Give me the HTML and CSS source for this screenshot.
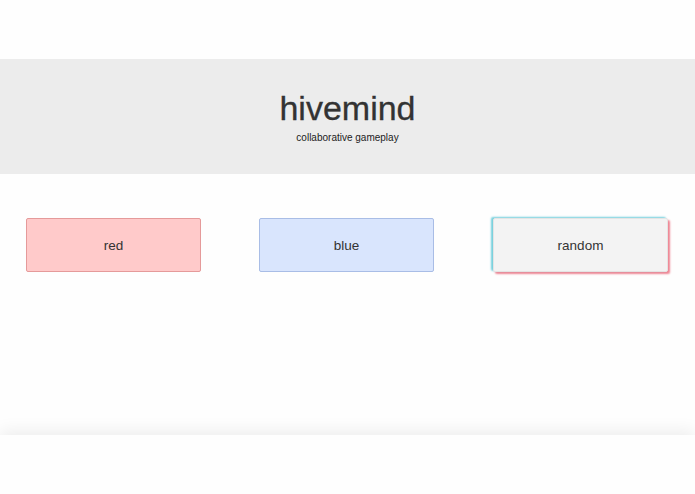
FILE: index.html
```html
<!DOCTYPE html>
<html lang="en">

<head>
  <meta charset="UTF-8">
  <meta name="viewport" content="width=device-width, initial-scale=1.0">
  <title>hivemind</title>
  <link rel="stylesheet" href="styles.css">
</head>

<body>
  <div class="page">
    <div class="header">
      <div class="title">hivemind</div>
      <div class="subtitle">collaborative gameplay</div>
    </div>
    <div class="teams">
      <div class="team red">red</div>
      <div class="team blue">blue</div>
      <div class="team random">random</div>
    </div>
  </div>
  <div class="footer"></div>
</body>

</html>
```

FILE: styles.css
```css
html,
body {
  margin: 0;
  padding: 0;
  height: 100%;
  background: #fefefe;
  font-family: "Liberation Sans", Arial, sans-serif;
  color: #333;
}

body {
  display: flex;
  flex-direction: column;
}

.page {
  flex: 1;
  padding-top: 59px;
}

.header {
  height: 115px;
  background: #ececec;
  display: flex;
  flex-direction: column;
  align-items: center;
  justify-content: center;
}

.title {
  font-size: 34px;
  line-height: 36px;
  margin-top: 0;
  -webkit-text-stroke: 0.3px #333;
}

.subtitle {
  font-size: 10px;
  margin-top: 6px;
  color: #222;
}

.teams {
  display: flex;
  justify-content: space-between;
  padding: 44px 27px 0 26px;
}

.team {
  box-sizing: border-box;
  width: 175px;
  height: 54px;
  display: flex;
  align-items: center;
  justify-content: center;
  font-size: 13.5px;
  border-radius: 2px;
}

.red {
  background: #ffcaca;
  border: 1px solid #e59a9a;
}

.blue {
  margin-left: -1px;
  background: #d9e5fd;
  border: 1px solid #a9bde6;
}

.random {
  background: #f3f3f3;
  border: 1px solid #e4e4e4;
  box-shadow: -2px -1px 2px #74cfdc, 2px 2px 2px #ee8593;
}

.footer {
  height: 59px;
  background: #fefefe;
  box-shadow: 0 -4px 16px rgba(0, 0, 0, 0.07);
}
```
